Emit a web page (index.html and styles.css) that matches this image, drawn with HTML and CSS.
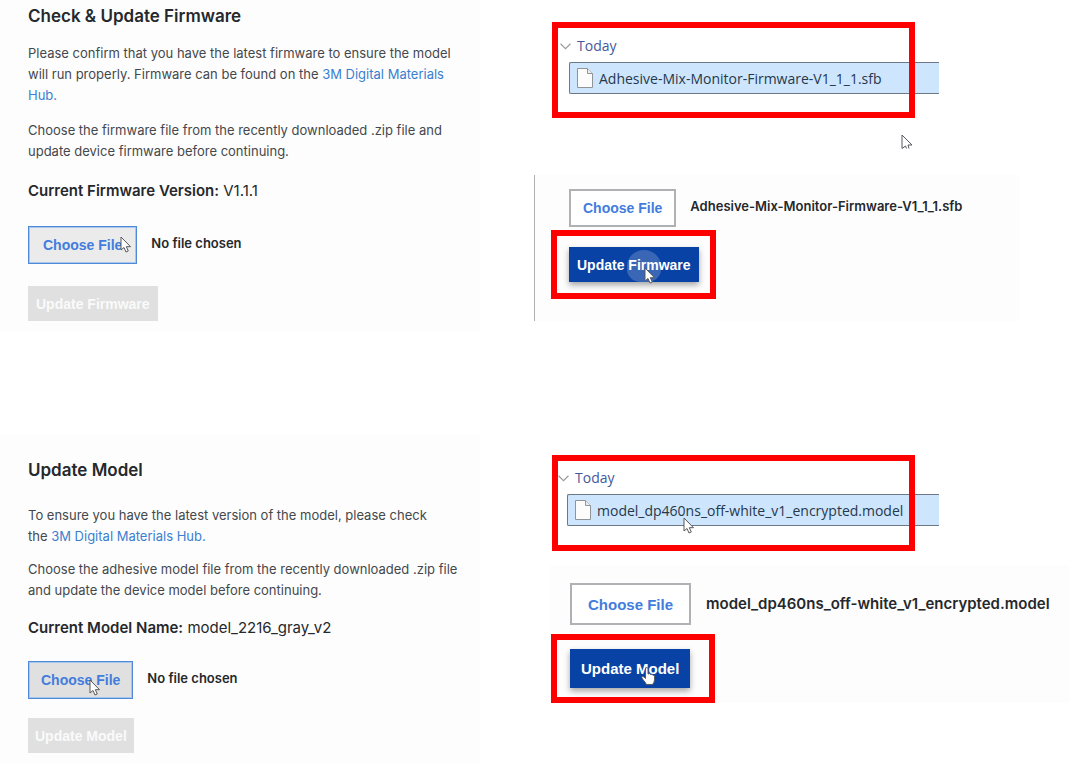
FILE: index.html
```html
<!DOCTYPE html>
<html lang="en">
<head>
    <meta charset="UTF-8">
    <meta name="viewport" content="width=device-width, initial-scale=1.0">
    <title>Update Firmware and Model</title>
    <link rel="stylesheet" href="styles.css">
</head>
<body>
    <!-- Shared shapes -->
    <svg class="defs" aria-hidden="true">
        <symbol id="arrow" viewBox="0 0 12 18">
            <path d="M1 1v13l3-2.500 2 4.500 2.300-1-2-4.300h4.200z"/>
        </symbol>
        <symbol id="arrow-cut" viewBox="0 0 12 15">
            <path d="M1 14.500V1l10 10H7l1 3.500M1 14.500 4.500 12l1 2.500"/>
        </symbol>
        <symbol id="file" viewBox="0 0 16 20">
            <path d="M.5.5h10l5 5v14H.5z" fill="#fcfcfc" stroke="#8f9499"/>
            <path d="M10.500.5v5h5" fill="#eee" stroke="#8f9499"/>
        </symbol>
        <symbol id="chevron" viewBox="0 0 10 6">
            <path d="M.5.5 5 5 9.500.5" fill="none" stroke="#999"/>
        </symbol>
    </svg>

    <main class="guide">
        <section class="panel">
            <h2>Check &amp; Update Firmware</h2>
            <p>Please confirm that you have the latest firmware to ensure the model<br>will run properly. Firmware can be found on the <a href="#">3M Digital Materials<br>Hub.</a></p>
            <p>Choose the firmware file from the recently downloaded .zip file and<br>update device firmware before continuing.</p>
            <div class="current"><strong>Current Firmware Version:</strong> V1.1.1</div>
            <div class="file-row">
                <button type="button" class="choose focused">Choose File
                    <svg class="cursor cursor-end"><use href="#arrow"/></svg>
                </button>
                <span class="file-name">No file chosen</span>
            </div>
            <button type="button" class="update" disabled>Update Firmware</button>
        </section>

        <section class="steps">
            <div class="explorer">
                <h3><svg class="chevron"><use href="#chevron"/></svg>Today</h3>
                <div class="file-item"><svg class="file-icon"><use href="#file"/></svg>Adhesive-Mix-Monitor-Firmware-V1_1_1.sfb</div>
                <div class="highlight"></div>
                <svg class="cursor cursor-below"><use href="#arrow-cut"/></svg>
            </div>
            <div class="form">
                <div class="file-row">
                    <button type="button" class="choose">Choose File</button>
                    <span class="file-name">Adhesive-Mix-Monitor-Firmware-V1_1_1.sfb</span>
                </div>
                <div class="callout">
                    <button type="button" class="update">Update Firmware
                        <span class="ripple"></span>
                        <svg class="cursor cursor-click"><use href="#arrow"/></svg>
                    </button>
                </div>
            </div>
        </section>

        <section class="panel panel-model">
            <h2>Update Model</h2>
            <p>To ensure you have the latest version of the model, please check<br>the <a href="#">3M Digital Materials Hub.</a></p>
            <p>Choose the adhesive model file from the recently downloaded .zip file<br>and update the device model before continuing.</p>
            <div class="current"><strong>Current Model Name:</strong> model_2216_gray_v2</div>
            <div class="file-row">
                <button type="button" class="choose focused pressed">Choose File
                    <svg class="cursor cursor-middle"><use href="#arrow"/></svg>
                </button>
                <span class="file-name">No file chosen</span>
            </div>
            <button type="button" class="update" disabled>Update Model</button>
        </section>

        <section class="steps steps-model">
            <div class="explorer">
                <h3><svg class="chevron"><use href="#chevron"/></svg>Today</h3>
                <div class="file-item"><svg class="file-icon"><use href="#file"/></svg>model_dp460ns_off-white_v1_encrypted.model
                    <svg class="cursor cursor-item"><use href="#arrow"/></svg>
                </div>
                <div class="highlight"></div>
            </div>
            <div class="form">
                <div class="file-row">
                    <button type="button" class="choose">Choose File</button>
                    <span class="file-name">model_dp460ns_off-white_v1_encrypted.model</span>
                </div>
                <div class="callout">
                    <button type="button" class="update">Update Model
                        <svg class="cursor hand" viewBox="0 0 14 18"><path d="M4.500 10V2q0-1.500 1.300-1.500T7 2v5q2-1 2.500.5 2-.8 2.300.7 1.700-.4 1.700 1.300v3q0 3-2 5H5.500q-1-2-4-5.500-1.500-2 0-2.500 1.500-.3 3 2z"/></svg>
                    </button>
                </div>
            </div>
        </section>
    </main>
</body>
</html>
```
FILE: styles.css
```css
* {
    box-sizing: border-box;
}
body {
    margin: 0;
    background-color: #ffffff;
    color: #25282c;
    font-family: Inter, sans-serif;
    font-size: 13px;
    line-height: 21px;
}
.defs {
    display: none;
}
.guide {
    display: grid;
    grid-template-columns: minmax(320px, 480px) 1fr;
    row-gap: 103px;
    align-items: start;
}
.panel {
    padding: 6px 0 11px 28px;
    background-color: #fdfdfd;
}
h2 {
    margin: 0 0 17px;
    font-size: 17px;
    font-weight: 600;
    line-height: 20px;
}
p {
    margin: 0 0 14px;
    color: #44484c;
}
a {
    color: #3a7fd0;
    text-decoration: none;
}
.current {
    margin: 19px 0 25px;
    font-size: 15px;
    line-height: 20px;
}
.current strong {
    font-weight: 600;
}
.file-row {
    display: flex;
    gap: 14px;
}
.file-name {
    padding-top: 7px;
    font-weight: 600;
    white-space: nowrap;
}
button {
    position: relative;
    font-family: "Liberation Sans", Arial, sans-serif;
    font-size: 14px;
    font-weight: bold;
    white-space: nowrap;
}
.choose {
    height: 38px;
    padding: 0 12px;
    border: 2px solid #b0b1b5;
    background-color: #ffffff;
    color: #427ddd;
}
.choose.focused {
    padding: 0 14px;
    border: 1px solid #4f89d8;
    background-color: #ebebeb;
    box-shadow: inset 0 0 0 1px #a9c6ec;
}
.choose.pressed {
    background-color: #e0e0e0;
}
.update {
    display: block;
    height: 35px;
    padding: 0 8px;
    border: none;
    background-color: #0842a4;
    color: #ffffff;
    box-shadow: 0 3px 6px rgba(0, 0, 0, 0.35);
}
.update:disabled {
    margin-top: 22px;
    background-color: #e0e0e0;
    color: #fafafa;
    box-shadow: none;
}

/* Windows file list */
.explorer {
    position: relative;
    max-width: 459px;
    padding: 36px 0 24px 80px;
    font-family: "Open Sans", sans-serif;
    font-size: 14px;
}
.explorer h3 {
    display: flex;
    align-items: center;
    gap: 6px;
    margin: 0 0 6px;
    color: #45589c;
    font-size: 14px;
    font-weight: normal;
    line-height: 20px;
}
.chevron {
    width: 11px;
    height: 7px;
}
.file-item {
    position: relative;
    display: flex;
    align-items: center;
    gap: 6px;
    height: 32px;
    margin-left: 9px;
    padding-left: 7px;
    border: 1px solid #6c7884;
    border-right: none;
    border-radius: 2px 0 0 2px;
    background-color: #cde6fd;
    color: #26384c;
    white-space: nowrap;
}
.file-icon {
    width: 16px;
    height: 20px;
}
.highlight {
    position: absolute;
    inset: 22px 24px 0 72px;
    border: 6px solid #fe0000;
}

.form {
    margin: 57px 50px 0 54px;
    padding: 14px 0 22px;
    border-left: 1px solid #b0b0b0;
    background-color: #fdfdfd;
}
.form .file-row {
    padding-left: 34px;
}
.callout {
    width: fit-content;
    margin: 3px 0 0 16px;
    padding: 11px 11px 11px 12px;
    border: 6px solid #fe0000;
}

/* Model row */
.panel-model {
    padding: 25px 0 12px 28px;
}
.panel-model h2 {
    margin-bottom: 25px;
}
.panel-model p {
    margin-bottom: 12px;
}
.panel-model .current {
    margin: 17px 0 23px;
}
.panel-model .choose {
    padding: 0 12px;
}
.panel-model .update {
    margin-top: 19px;
    padding: 0 7px;
}
.steps-model {
    padding-top: 20px;
}
.steps-model .explorer {
    padding: 13px 0 25px 78px;
}
.steps-model .highlight {
    top: 0;
}
.steps-model .form {
    margin: 14px 0 0 70px;
    padding: 18px 0 0;
    border-left: none;
}
.steps-model .file-row {
    gap: 15px;
    padding-left: 20px;
}
.steps-model .file-name {
    padding-top: 10px;
    font-size: 15px;
}
.steps-model button {
    font-size: 15px;
}
.steps-model .choose {
    height: 42px;
    padding: 0 16px;
}
.steps-model .update {
    height: 39px;
    padding: 0 11px;
}
.steps-model .callout {
    margin: 9px 0 0 1px;
    padding: 9px 19px 9px 13px;
}

/* Mouse pointers */
.cursor {
    position: absolute;
    width: 12px;
    height: 18px;
    fill: #ffffff;
    stroke: #55585c;
}
.cursor-end {
    right: 4px;
    top: 9px;
}
.cursor-middle {
    left: 60px;
    top: 17px;
}
.cursor-below {
    right: 26px;
    top: 134px;
    height: 15px;
}
.cursor-click {
    left: 75px;
    top: 20px;
}
.cursor-item {
    left: 115px;
    top: 22px;
}
.hand {
    left: 71px;
    top: 18px;
    width: 14px;
}
.ripple {
    position: absolute;
    left: 58px;
    top: 3px;
    width: 34px;
    height: 32px;
    border-radius: 50% 50% 40% 40%;
    background-color: rgba(255, 255, 255, 0.2);
}
```
